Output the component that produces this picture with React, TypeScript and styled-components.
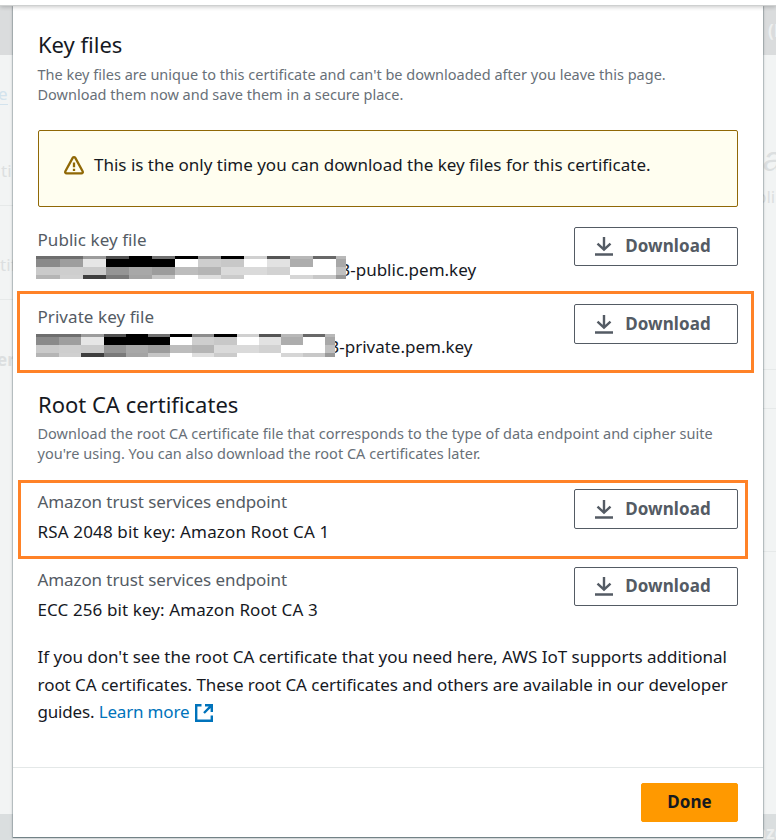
import React from 'react';
import styled, { createGlobalStyle, css } from 'styled-components';

const GlobalStyle = createGlobalStyle`
  * { box-sizing: border-box; }
  body {
    margin: 0;
    background: #f2f4f4;
    color: #16191f;
    font-family: 'Noto Sans', 'Open Sans', sans-serif;
    font-size: 17px;
  }
`;

const Page = styled.div`
  display: flex;
  flex-direction: column;
  width: 776px;
  height: 840px;
  overflow: hidden;
`;

const TopEdge = styled.div`
  flex: none;
  height: 6px;
  background: #fff;
  border-bottom: 1px solid #ced0d0;
  box-shadow: 0 1px 4px rgba(0, 0, 0, 0.22);
  z-index: 2;
`;

const Stage = styled.div`
  flex: 1;
  display: grid;
  grid-template-columns: 13px 750px 13px;
  min-height: 0;
`;

const Gutter = styled.div<{ $side: 'left' | 'right' }>`
  display: flex;
  flex-direction: column;
  align-items: ${(p) => (p.$side === 'left' ? 'flex-end' : 'flex-start')};
  overflow: hidden;
  white-space: nowrap;
`;

const Band = styled.div<{ $height: number; $tone?: 'header' | 'footer'; $line?: boolean }>`
  flex: none;
  display: flex;
  align-items: flex-end;
  width: 100%;
  height: ${(p) => p.$height}px;
  ${(p) => p.$tone === 'header' && css`background: #dadcdd;`}
  ${(p) => p.$tone === 'footer' && css`background: #dadedf;`}
  ${(p) => p.$line && css`border-bottom: 1px solid #e6e9e9;`}
`;

const Ghost = styled.span<{ $tone?: 'link' | 'light'; $bold?: boolean; $size?: number; $shift?: number; $lift?: number }>`
  line-height: 24px;
  font-size: ${(p) => p.$size ?? 17}px;
  font-weight: ${(p) => (p.$bold ? 700 : 400)};
  margin-left: ${(p) => p.$shift ?? 0}px;
  margin-bottom: ${(p) => p.$lift ?? 0}px;
  color: ${(p) => (p.$tone === 'link' ? '#d3e3ed' : p.$tone === 'light' ? '#edefef' : '#dcdfe0')};
  ${(p) => p.$tone === 'link' && css`border-bottom: 1px solid #d3e3ed; line-height: 21px;`}
`;

const GhostScript = styled(Ghost)`
  font-family: 'Liberation Sans', sans-serif;
  font-style: italic;
`;

const Dialog = styled.section`
  display: flex;
  flex-direction: column;
  height: 831px;
  background: #fff;
  box-shadow: 0 1px 1px 0 rgba(0, 28, 36, 0.4), 0 0 1px 1px rgba(0, 28, 36, 0.16), 0 1px 4px rgba(0, 28, 36, 0.1);
  z-index: 1;
`;

const Body = styled.div`
  flex: none;
  height: 761px;
  padding: 24px 25px 0;
`;

const Title = styled.h3<{ $gap?: number }>`
  margin: ${(p) => p.$gap ?? 0}px 0 ${(p) => (p.$gap ? 5 : 6)}px;
  font-size: 22px;
  line-height: 28px;
  font-weight: 400;
`;

const Description = styled.p<{ $track?: number }>`
  margin: 0 0 0 -0.5px;
  font-size: 14.5px;
  line-height: 20px;
  color: #687078;
  white-space: nowrap;
  letter-spacing: ${(p) => p.$track ?? 0}px;
`;

const Alert = styled.div`
  display: flex;
  gap: 10px;
  height: 77px;
  margin: 26px 0 20px;
  padding: 23px 0 0 25px;
  border: 1px solid #906806;
  border-radius: 2px;
  background: #fffef0;
  line-height: 22px;
`;

const Fields = styled.div<{ $gap?: number }>`
  display: flex;
  flex-direction: column;
  margin-top: ${(p) => p.$gap ?? 0}px;
`;

const Field = styled.div<{ $height?: number }>`
  position: relative;
  display: flex;
  justify-content: space-between;
  align-items: flex-start;
  height: ${(p) => p.$height ?? 77}px;
`;

const Highlight = styled.div<{ $left: number; $right: number; $top: number; $height: number }>`
  position: absolute;
  left: ${(p) => p.$left}px;
  right: ${(p) => p.$right}px;
  top: ${(p) => p.$top}px;
  height: ${(p) => p.$height}px;
  border: 3px solid #ff8227;
  pointer-events: none;
`;

const FieldText = styled.div`
  display: flex;
  flex-direction: column;
  margin: -2px 0 0 -0.5px;
  line-height: 30px;
`;

const Label = styled.span<{ $track?: number }>`
  color: #545b64;
  letter-spacing: ${(p) => p.$track ?? 0.06}px;
`;

const Value = styled.span<{ $track?: number }>`
  display: flex;
  letter-spacing: ${(p) => p.$track ?? 0}px;
`;

const Mosaic = styled.span<{ $width: number; $drop: number }>`
  display: grid;
  grid-template-columns: 24fr repeat(12, 23fr) 10fr;
  grid-template-rows: 3px 8px 8px 4px;
  width: ${(p) => p.$width}px;
  height: 23px;
  margin: ${(p) => p.$drop}px -5.5px 0 -1.5px;
  z-index: 1;
`;

const Tile = styled.i<{ $shade: string }>`
  background: #${(p) => p.$shade};
`;

const Button = styled.button<{ $primary?: boolean; $height?: number }>`
  display: flex;
  align-items: center;
  justify-content: center;
  gap: 12px;
  width: ${(p) => (p.$primary ? 97 : 164)}px;
  height: ${(p) => p.$height ?? 39}px;
  padding: 0 ${(p) => (p.$primary ? 0 : 6)}px 1px 0;
  border: 1px solid ${(p) => (p.$primary ? '#ff9900' : '#545b64')};
  border-radius: 2px;
  background: ${(p) => (p.$primary ? '#ff9900' : '#fff')};
  color: ${(p) => (p.$primary ? '#16191f' : '#545b64')};
  font: 700 17px/22px 'Noto Sans', 'Open Sans', sans-serif;
  letter-spacing: 0.1px;
`;

const Icon = styled.svg<{ $top?: number }>`
  flex: none;
  margin-top: ${(p) => p.$top ?? 0}px;
`;

const Note = styled.p`
  margin: -2px 0 0 -0.5px;
  line-height: 27.5px;
  white-space: nowrap;
`;

const NoteLine = styled.span<{ $track: number }>`
  display: block;
  letter-spacing: ${(p) => p.$track}px;
`;

const Link = styled.a`
  color: #0073bb;
  svg { margin-left: 6px; vertical-align: -4px; }
`;

const Footer = styled.footer`
  flex: 1;
  display: flex;
  justify-content: flex-end;
  padding: 15px 25px 0;
  border-top: 1px solid #e4e8e8;
`;

const SHADES = [
  '6e6e6e 6e6e6e 9c9c9c 505050 000000 707070 000000 8c8c8c 000000 d0d0d0 555555 b8b8b8 686868 b8b8b8',
  '8a8a8a 9e9e9e e6e6e6 000000 000000 000000 ffffff cecece c8c8c8 ffffff e2e2e2 adadad ffffff a8a8a8',
  'cacaca cecece cbcbcb 959595 a8a8a8 9c9c9c bdbdbd b5b5b5 dadada dadada d2d2d2 ffffff ffffff c0c0c0',
  'b5b5b5 d0d0d0 3e3e3e 7a7a7a a4a4a4 c5c5c5 ffffff dedede cbcbcb ffffff ffffff d6d6d6 c8c8c8 9a9a9a',
].flatMap((row) => row.split(' '));

const Redacted = ({ width, drop = 1 }: { width: number; drop?: number }) => (
  <Mosaic $width={width} $drop={drop}>
    {SHADES.map((shade, i) => <Tile key={i} $shade={shade} />)}
  </Mosaic>
);

const WarningIcon = () => (
  <Icon $top={2} width="20" height="19" viewBox="0 0 20 19" fill="none" stroke="#906806" strokeWidth="2.3">
    <path d="M8.7 1.9 1.4 15.2c-.6 1.1 0 2.1 1.2 2.1h14.8c1.2 0 1.8-1 1.2-2.1L11.3 1.9c-.6-1-2-1-2.6 0Z" strokeLinejoin="round" />
    <path d="M10 6.4v4.8M10 12.7v2.3" />
  </Icon>
);

const DownloadButton = ({ height }: { height?: number }) => (
  <Button $height={height}>
    <Icon $top={1} width="18" height="19" viewBox="0 0 18 19" fill="none" stroke="#545b64" strokeWidth="2.4">
      <path d="M9 0v12.4M2.5 6.6 9 12.7l6.5-6.1M0 17.5h18" />
    </Icon>
    Download
  </Button>
);

const ExternalIcon = () => (
  <svg width="18" height="18" viewBox="0 0 18 18" fill="none" stroke="#0073bb" strokeWidth="2.4">
    <path d="M6.5 1.2H1.2v15.6h15.6v-5.3M10 1.2h6.8V8M16.3 1.7 9 9" />
  </svg>
);

export default function App() {
  return (
    <Page>
      <GlobalStyle />
      <TopEdge />
      <Stage>
        <Gutter $side="left">
          <Band $height={49} $tone="header" />
          <Band $height={50}><Ghost $tone="link" $shift={-2}>e</Ghost></Band>
          <Band $height={101} $line><Ghost $lift={22} $shift={1}>ti</Ghost></Band>
          <Band $height={94} $line><Ghost $lift={22} $shift={0}>tif</Ghost></Band>
          <Band $height={72}><Ghost $bold $shift={-3}>er</Ghost></Band>
          <Band $height={442} />
          <Band $height={26} $tone="footer" />
        </Gutter>
        <Dialog>
          <Body>
            <Title>Key files</Title>
            <Description>
              The key files are unique to this certificate and can't be downloaded after you leave this page.<br />
              Download them now and save them in a secure place.
            </Description>
            <Alert>
              <WarningIcon />
              This is the only time you can download the key files for this certificate.
            </Alert>
            <Fields>
              <Field>
                <FieldText>
                  <Label>Public key file</Label>
                  <Value><Redacted width={310} />3-public.pem.key</Value>
                </FieldText>
                <DownloadButton />
              </Field>
              <Field>
                <FieldText>
                  <Label>Private key file</Label>
                  <Value><Redacted width={299} drop={2} />3-private.pem.key</Value>
                </FieldText>
                <DownloadButton height={40} />
                <Highlight $left={-21} $right={-16} $top={-13} $height={82} />
              </Field>
            </Fields>
            <Title $gap={9}>Root CA certificates</Title>
            <Description $track={0.022}>
              Download the root CA certificate file that corresponds to the type of data endpoint and cipher suite<br />
              you're using. You can also download the root CA certificates later.
            </Description>
            <Fields $gap={26}>
              <Field $height={78}>
                <FieldText>
                  <Label $track={-0.09}>Amazon trust services endpoint</Label>
                  <Value $track={0.15}>RSA 2048 bit key: Amazon Root CA 1</Value>
                </FieldText>
                <DownloadButton height={40} />
                <Highlight $left={-20} $right={-10} $top={-9} $height={79} />
              </Field>
              <Field $height={78}>
                <FieldText>
                  <Label $track={-0.09}>Amazon trust services endpoint</Label>
                  <Value $track={0.1}>ECC 256 bit key: Amazon Root CA 3</Value>
                </FieldText>
                <DownloadButton />
              </Field>
            </Fields>
            <Note>
              <NoteLine $track={-0.015}>If you don't see the root CA certificate that you need here, AWS IoT supports additional</NoteLine>
              <NoteLine $track={-0.045}>root CA certificates. These root CA certificates and others are available in our developer</NoteLine>
              <NoteLine $track={-0.17}>guides. <Link>Learn more<ExternalIcon /></Link></NoteLine>
            </Note>
          </Body>
          <Footer>
            <Button $primary>Done</Button>
          </Footer>
        </Dialog>
        <Gutter $side="right">
          <Band $height={49} $tone="header"><Ghost $tone="light" $bold $shift={5} $lift={12}>(N</Ghost></Band>
          <Band $height={118}><GhostScript $size={35} $lift={2}>a</GhostScript></Band>
          <Band $height={36}><Ghost $shift={-7}>pli</Ghost></Band>
          <Band $height={161} $line />
          <Band $height={39} $line />
          <Band $height={143} $line />
          <Band $height={262} />
          <Band $height={26} $tone="footer"><Ghost $tone="light" $bold $shift={-7} $lift={-5}>azon</Ghost></Band>
        </Gutter>
      </Stage>
    </Page>
  );
}
